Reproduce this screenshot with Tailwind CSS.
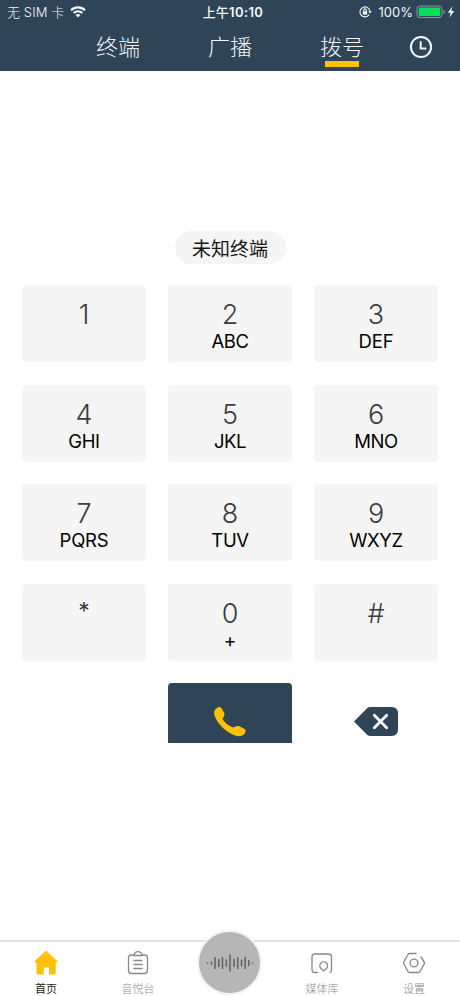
<!DOCTYPE html>
<html lang="zh-CN">
<head>
<meta charset="utf-8">
<title>拨号</title>
<script src="https://cdn.jsdelivr.net/npm/@tailwindcss/browser@4"></script>
</head>
<body class="w-[460px] h-[996px] bg-white overflow-hidden flex flex-col font-[Inter,'Noto_Sans_CJK_SC',sans-serif]">
<header class="h-[71px] bg-[#2f4457] text-[#f1f6fa] shrink-0">
  <div class="h-6 pl-[7px] pr-[5px] grid grid-cols-3 items-center text-[13px] leading-6">
    <div class="flex items-center gap-[6px]"><span class="whitespace-nowrap tracking-[0.1px] font-light">无 SIM 卡</span>
      <svg width="16" height="12" viewBox="0 0 16 12" fill="none" stroke="currentColor" stroke-width="2.2"><path d="M1 4.3a10 10 0 0 1 14 0M3.6 7.1a6.2 6.2 0 0 1 8.8 0"/><path d="M8 11.6 5.5 9.1a3.6 3.6 0 0 1 5 0z" fill="currentColor" stroke="none"/></svg>
    </div>
    <div class="text-center tracking-[0.2px] pl-1"><span class="font-medium">上午</span><span class="font-semibold tracking-[0.4px]">10:10</span></div>
    <div class="flex items-center justify-end">
      <svg width="13" height="12" viewBox="0 0 13 12" fill="none" stroke="currentColor" stroke-width="1.1"><path d="M10.2 8.6A5 5 0 1 1 11 5.5"/><path d="M9.3 5.2h3.4L11 7.5z" fill="currentColor" stroke="none"/><rect x="3.8" y="5.2" width="4.4" height="3.4" fill="currentColor" stroke="none"/><path d="M4.7 5.3V4.2a1.3 1.3 0 0 1 2.6 0v1.1"/></svg>
      <span class="ml-[7px] mr-[3px]">100%</span>
      <svg width="30" height="14" viewBox="0 0 30 14"><rect x="1" y="1" width="25" height="11.6" rx="3" fill="none" stroke="#8b9aa7"/><rect x="2.7" y="2.6" width="21.6" height="8.5" rx="1.6" fill="#07df5a"/><path d="M27.4 5v4q1.4-.6 1.4-2t-1.4-2" fill="#8b9aa7"/></svg>
      <svg class="ml-px" width="8" height="12" viewBox="0 0 8 12" fill="currentColor"><path d="M5.3.5.8 6.8h2.7L2.5 11.5 7.2 5H4.4z"/></svg>
    </div>
  </div>
  <nav class="h-[47px] pl-[62px] flex text-[22px] leading-[46px] text-center font-light">
    <div class="w-28">终端</div>
    <div class="w-28">广播</div>
    <div class="w-28 relative">拨号<i class="absolute left-[39px] top-[37px] w-[34px] h-[6px] bg-[#ffc103]"></i></div>
    <div class="flex-1 flex justify-center"><svg class="mt-[11px] mr-[16px]" width="24" height="24" viewBox="0 0 24 24" fill="none" stroke="currentColor" stroke-width="2"><circle cx="12" cy="12" r="10.1"/><path d="M11.7 6.3v7.2h5.6"/></svg></div>
  </nav>
</header>
<main class="flex-1 flex flex-col items-center">
  <div class="mt-[160px] w-[111px] h-[33px] rounded-full bg-[#f5f5f5] text-center text-[19px] leading-[37px] text-[#171717]">未知终端</div>
  <div class="mt-[21px] grid grid-cols-[124px_124px_124px] gap-x-[22px] gap-y-[22.5px] text-center">
    <div class="h-[77px] rounded bg-[#f5f5f5] pt-[14px]"><div class="text-[27px] leading-[31px] font-[360] text-[#3c3c3c]">1</div></div>
    <div class="h-[77px] rounded bg-[#f5f5f5] pt-[14px]"><div class="text-[27px] leading-[31px] font-[360] text-[#3c3c3c]">2</div><div class="text-[18.5px] leading-[23px] tracking-[-0.4px] text-black">ABC</div></div>
    <div class="h-[77px] rounded bg-[#f5f5f5] pt-[14px]"><div class="text-[27px] leading-[31px] font-[360] text-[#3c3c3c]">3</div><div class="text-[18.5px] leading-[23px] tracking-[-0.2px] text-black">DEF</div></div>
    <div class="h-[77px] rounded bg-[#f5f5f5] pt-[14px]"><div class="text-[27px] leading-[31px] font-[360] text-[#3c3c3c]">4</div><div class="text-[18.5px] leading-[23px] tracking-[-0.4px] text-black">GHI</div></div>
    <div class="h-[77px] rounded bg-[#f5f5f5] pt-[14px]"><div class="text-[27px] leading-[31px] font-[360] text-[#3c3c3c]">5</div><div class="text-[18.5px] leading-[23px] tracking-[-0.4px] text-black">JKL</div></div>
    <div class="h-[77px] rounded bg-[#f5f5f5] pt-[14px]"><div class="text-[27px] leading-[31px] font-[360] text-[#3c3c3c]">6</div><div class="text-[18.5px] leading-[23px] tracking-[-0.4px] text-black">MNO</div></div>
    <div class="h-[77px] rounded bg-[#f5f5f5] pt-[14px]"><div class="text-[27px] leading-[31px] font-[360] text-[#3c3c3c]">7</div><div class="text-[18.5px] leading-[23px] tracking-[-0.2px] text-black">PQRS</div></div>
    <div class="h-[77px] rounded bg-[#f5f5f5] pt-[14px]"><div class="text-[27px] leading-[31px] font-[360] text-[#3c3c3c]">8</div><div class="text-[18.5px] leading-[23px] tracking-[-0.4px] text-black">TUV</div></div>
    <div class="h-[77px] rounded bg-[#f5f5f5] pt-[14px]"><div class="text-[27px] leading-[31px] font-[360] text-[#3c3c3c]">9</div><div class="text-[18.5px] leading-[23px] tracking-[-0.4px] text-black">WXYZ</div></div>
    <div class="h-[77px] rounded bg-[#f5f5f5] pt-[12px]"><div class="text-[23px] leading-[30px] text-[#3c3c3c]">*</div></div>
    <div class="h-[77px] rounded bg-[#f5f5f5] pt-[14px]"><div class="text-[27px] leading-[31px] font-[360] text-[#3c3c3c]">0</div><div class="text-[19px] leading-[23px] text-black">+</div></div>
    <div class="h-[77px] rounded bg-[#f5f5f5] pt-[14px]"><div class="text-[27px] leading-[31px] font-[360] text-[#3c3c3c]">#</div></div>
    <div></div>
    <div class="h-[60px] rounded-t bg-[#2f4457] flex justify-center pt-[23px]">
      <svg width="34" height="32" viewBox="0 0 34 32" fill="#ffc107"><path d="M2.300 3.500C3.300 2.200 5 1.200 6.500 1C7.700 1 8.400 2 9 3L11 6.500C12 8.500 11.300 10.300 10 12C9.500 12.700 9.600 13.400 10.100 14C12.500 17 15.500 19.600 19.200 21.300C20 21.600 20.800 21.500 21.500 21.100C23.300 20.200 25 19.500 26.800 20.400L31.200 22.700C32.800 23.600 33 25 32.200 26.700C31 29 29 30.200 26 30.200C22 30.200 17.500 27.800 13 24.500C7 20 2.500 13.500 1.300 8.500C.9 6.500 1.300 4.800 2.300 3.500Z"/></svg>
    </div>
    <div class="flex justify-center pt-[23px]"><svg width="46" height="31" viewBox="0 0 46 31"><path d="M1 15.5 14 2.3Q15.4 1 17.4 1H38.5Q45 1 45 7.5V23.500Q45 30 38.5 30H17.400Q15.400 30 14 28.700Z" fill="#2f4457"/><path d="m21.300 9.300 12.400 12.400m0-12.400L21.300 21.700" stroke="#fff" stroke-width="2.800" stroke-linecap="round"/></svg></div>
  </div>
</main>
<footer class="h-[56px] shrink-0 relative border-t-2 border-[#e2e2e2] grid grid-cols-5 text-center text-[11px] leading-[16px] text-[#8c8c8c]">
  <div class="pt-[8px] flex flex-col items-center text-[#222]">
    <svg width="26" height="26" viewBox="0 0 26 26"><path d="M12 1.500Q13 .700 14 1.500L24.300 11.200Q25 12.500 23.500 12.800H22.700V23Q22.700 24.500 21.200 24.500H16V18.200Q16 17.400 15.200 17.400H11.500Q10.700 17.400 10.700 18.200V24.500H5Q3.500 24.500 3.500 23V12.800H2.500Q1 12.500 1.700 11.200Z" fill="#ffc107"/></svg>
    <span class="mt-[5px]">首页</span>
  </div>
  <div class="pt-[8px] flex flex-col items-center">
    <svg width="26" height="26" viewBox="0 0 26 26" fill="none" stroke="#888" stroke-width="1.300" stroke-linecap="round"><path d="M8.500 5H6.300Q3.500 5 3.500 8V20.500Q3.500 23.500 6.500 23.500H19.500Q22.500 23.500 22.500 20.500V8Q22.500 5 19.700 5H17.500M9.200 5.500Q9.500 1.700 13 1.700T16.800 5.500ZM9 10.500h8M9 14.500h8M9 18.500h8"/></svg>
    <span class="mt-[5px] font-light">音悦台</span>
  </div>
  <div></div>
  <div class="pt-[8px] flex flex-col items-center">
    <svg width="26" height="26" viewBox="0 0 26 26" fill="none" stroke="#888" stroke-width="1.300" stroke-linecap="round"><path d="M8.500 22.500H6Q3 22.500 3 19.500V7Q3 4 6 4H19.500Q22.500 4 22.500 7V20Q22.500 22 21 22.500M14.700 21 11.900 18.500A3.900 3.900 0 1 1 17.500 18.500Z"/></svg>
    <span class="mt-[5px] font-light">媒体库</span>
  </div>
  <div class="pt-[8px] flex flex-col items-center">
    <svg width="26" height="26" viewBox="0 0 26 26" fill="none" stroke="#888" stroke-width="1.400" stroke-linecap="round" stroke-linejoin="round"><path d="M15 3.500H8.500Q7.500 3.500 7 4.500L2.800 12Q2.300 13 2.800 14L7 21.500Q7.500 22.500 8.500 22.500H17.500Q18.500 22.500 19 21.500L23.200 14Q23.700 13 23.200 12L20 7"/><circle cx="13" cy="13" r="3.900"/></svg>
    <span class="mt-[5px] font-light">设置</span>
  </div>
  <div class="absolute left-[197px] top-[-12px] size-[65px] rounded-full bg-[#f2f2f2] flex items-center justify-center">
    <div class="size-[61px] rounded-full bg-[#b6b6b6] flex items-center justify-center">
      <svg width="50" height="20" viewBox="0 0 50 20" stroke="#666" stroke-width="1.600" stroke-linecap="round"><path d="M2.500 10v.1M6.500 8.800v2.400M10 4.500v11M13.800 6.500v7M17.500 4.500v11M21.300 7v6M25 2v16M29 6.500v7M32.700 4.500v11M36.500 7v6M40.200 4.500v11M43.800 7.500v5M47.500 10v.1"/></svg>
    </div>
  </div>
</footer>
</body>
</html>
